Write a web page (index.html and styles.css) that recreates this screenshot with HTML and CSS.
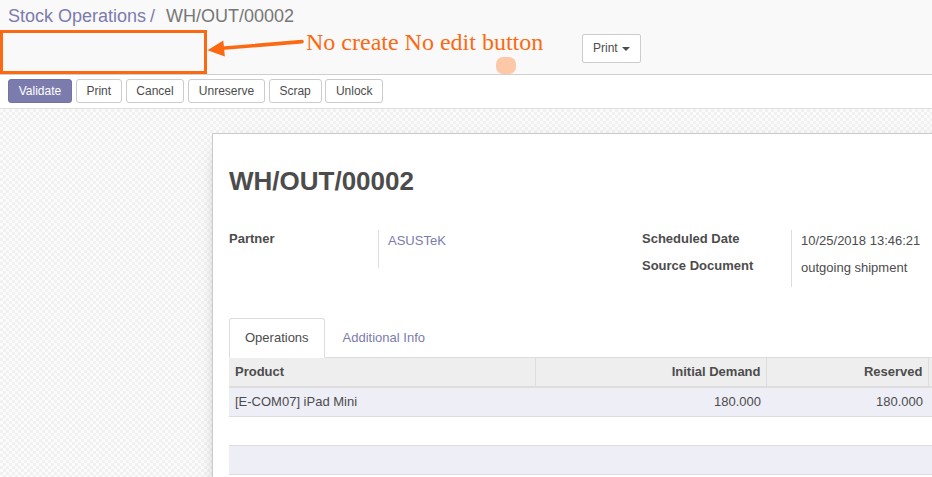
FILE: index.html
```html
<!DOCTYPE html>
<html lang="en">
<head>
<meta charset="utf-8">
<title>WH/OUT/00002</title>
<link rel="stylesheet" href="styles.css">
</head>
<body>
<div class="app">
  <div class="cp">
    <ol class="crumbs">
      <li class="crumb-link">Stock Operations</li>
      <li class="crumb-sep">/</li>
      <li class="crumb-cur">WH/OUT/00002</li>
    </ol>
    <div class="cp-bottom">
      <div class="cp-buttons"></div>
      <div class="cp-sidebar">
        <button class="btn btn-default btn-print">Print <span class="caret"></span></button>
      </div>
    </div>
  </div>

  <div class="statusbar">
    <div class="actions">
      <button class="btn btn-sm btn-primary">Validate</button>
      <button class="btn btn-sm">Print</button>
      <button class="btn btn-sm">Cancel</button>
      <button class="btn btn-sm">Unreserve</button>
      <button class="btn btn-sm">Scrap</button>
      <button class="btn btn-sm">Unlock</button>
    </div>
  </div>

  <div class="sheet-bg">
    <div class="sheet">
      <h1 class="title">WH/OUT/00002</h1>

      <div class="groups">
        <div class="group">
          <div class="lbl lbl-partner">Partner</div>
          <div class="val"><span class="link">ASUSTeK</span></div>
        </div>
        <div class="group">
          <div class="lbl lbl-first">Scheduled Date</div>
          <div class="val">10/25/2018 13:46:21</div>
          <div class="lbl lbl-last">Source Document</div>
          <div class="val">outgoing shipment</div>
        </div>
      </div>

      <div class="notebook">
        <ul class="tabs">
          <li class="tab active">Operations</li>
          <li class="tab">Additional Info</li>
        </ul>
        <table class="list">
          <colgroup>
            <col class="c1"><col class="c2"><col class="c3"><col class="c4">
          </colgroup>
          <thead>
            <tr>
              <th>Product</th>
              <th class="num">Initial Demand</th>
              <th class="num">Reserved</th>
              <th class="num"></th>
            </tr>
          </thead>
          <tbody>
            <tr class="odd">
              <td>[E-COM07] iPad Mini</td>
              <td class="num">180.000</td>
              <td class="num">180.000</td>
              <td></td>
            </tr>
            <tr><td>&nbsp;</td><td></td><td></td><td></td></tr>
            <tr class="odd"><td>&nbsp;</td><td></td><td></td><td></td></tr>
          </tbody>
        </table>
      </div>
    </div>
  </div>

  <div class="note-box"></div>
  <svg class="note-arrow" width="932" height="80" viewBox="0 0 932 80" aria-hidden="true">
    <line x1="302" y1="41.6" x2="222" y2="48.3" stroke="#fb6a12" stroke-width="3.6" stroke-linecap="round"/>
    <polygon points="207.5,50.3 223.3,40.4 224.9,56.6" fill="#fb6a12"/>
  </svg>
  <div class="note-text">No create No edit button</div>
  <div class="note-blob"></div>
</div>
</body>
</html>
```

FILE: styles.css
```css
html, body {
  margin: 0;
  padding: 0;
  height: 100%;
  overflow: hidden;
}

body {
  font-family: "Liberation Sans", Arial, Helvetica, sans-serif;
  font-size: 13px;
  line-height: 18px;
  color: #4c4c4c;
  background: #fff;
}

.app {
  position: relative;
  height: 100%;
}

/* ---------- control panel ---------- */
.cp {
  height: 74px;
  background: #f9f9f9;
  border-bottom: 1px solid #cfcfcf;
}

.crumbs {
  display: flex;
  margin: 0;
  padding: 6px 0 0 8px;
  list-style: none;
  font-size: 18px;
  line-height: 20px;
}

.crumb-link {
  color: #7c7bad;
}

.crumb-sep {
  color: #7c7bad;
  margin-left: 4px;
  margin-right: 11px;
}

.crumb-cur {
  color: #777;
}

.cp-bottom {
  display: grid;
  grid-template-columns: 574px auto;
  padding-left: 8px;
  margin-top: 8px;
}

.btn {
  font-family: inherit;
  color: #4c4c4c;
  background: #fff;
  border: 1px solid #ccc;
  border-radius: 3px;
  margin: 0;
  cursor: pointer;
}

.btn-print {
  font-size: 12px;
  line-height: 17px;
  padding: 5px 10px;
  border-radius: 2px;
}

.caret {
  display: inline-block;
  width: 0;
  height: 0;
  margin-left: 1px;
  vertical-align: middle;
  border-top: 4px solid #4c4c4c;
  border-left: 4px solid transparent;
  border-right: 4px solid transparent;
}

/* ---------- status bar ---------- */
.statusbar {
  background: #fff;
  padding: 4px 8px 5px;
  border-bottom: 1px solid #dedede;
}

.actions {
  display: flex;
  gap: 3.7px;
}

.btn-sm {
  box-sizing: border-box;
  height: 24px;
  font-size: 12px;
  line-height: 22px;
  padding: 0 9.75px;
}

.btn-primary {
  color: #fff;
  background: #7c7bad;
  border-color: #7473a6;
}

/* ---------- sheet ---------- */
.sheet-bg {
  padding: 24px 0 0 212px;
  overflow: hidden;
  height: 100%;
  background-color: #fbfbfb;
  background-image: repeating-conic-gradient(#f1f1f1 0 25%, #fbfbfb 0 50%);
  background-size: 6px 6px;
}

.sheet {
  width: 760px;
  padding: 32px 16px 0;
  background: #fff;
  border-top: 1px solid #c9c9cf;
  border-left: 1px solid #c9c9cf;
  box-shadow: 0 5px 20px -15px #000;
  min-height: 400px;
}

.title {
  margin: 0;
  font-size: 26px;
  line-height: 31px;
  font-weight: bold;
  color: #4c4c4c;
}

.groups {
  display: grid;
  grid-template-columns: 413px 1fr;
  align-items: start;
  margin-top: 33px;
}

.group {
  display: grid;
  grid-template-columns: 150px 1fr;
}

.lbl {
  font-weight: bold;
  border-right: 1px solid #ddd;
  padding-bottom: 9px;
}

.lbl-partner {
  padding-bottom: 20px;
}

.lbl-last {
  padding-bottom: 12px;
}

.val {
  padding: 2px 0 0 9px;
}

.link {
  color: #7c7bad;
}

/* ---------- notebook ---------- */
.notebook {
  margin-top: 31px;
}

.tabs {
  display: flex;
  margin: 0;
  padding: 0;
  list-style: none;
  border-bottom: 1px solid #ddd;
}

.tab {
  padding: 10px 15px;
  margin-right: 2px;
  margin-bottom: -1px;
  line-height: 18px;
  color: #7c7bad;
  border: 1px solid transparent;
  border-radius: 3px 3px 0 0;
}

.tab.active {
  color: #4c4c4c;
  background: #fff;
  border-color: #ddd #ddd transparent;
}

.list {
  width: 100%;
  border-collapse: collapse;
  table-layout: fixed;
}

.c1 { width: 306px; }
.c2 { width: 231px; }
.c3 { width: 162px; }

.list th,
.list td {
  padding: 5px 6px;
  line-height: 18px;
  text-align: left;
  white-space: nowrap;
  overflow: hidden;
}

.list th {
  font-weight: bold;
  background: #eee;
  border-bottom: 2px solid #ddd;
}

.list th + th {
  border-left: 1px solid #ddd;
}

.list td {
  border-bottom: 1px solid #ddd;
}

.list .num {
  text-align: right;
  padding-right: 5px;
}

.list tr.odd td {
  background: #eeeef6;
}

/* ---------- annotation overlays ---------- */
.note-box {
  position: absolute;
  left: 0;
  top: 30px;
  width: 207px;
  height: 44px;
  box-sizing: border-box;
  border: 3.3px solid #fb6a12;
}

.note-arrow {
  position: absolute;
  left: 0;
  top: 0;
  pointer-events: none;
}

.note-text {
  position: absolute;
  left: 306px;
  top: 30px;
  font-family: "Liberation Serif", "Times New Roman", serif;
  font-size: 24px;
  line-height: 24px;
  color: #fb6a12;
  white-space: nowrap;
}

.note-blob {
  position: absolute;
  left: 496px;
  top: 57px;
  width: 20px;
  height: 17px;
  border-radius: 7px;
  background: #fdc8a8;
}
```
